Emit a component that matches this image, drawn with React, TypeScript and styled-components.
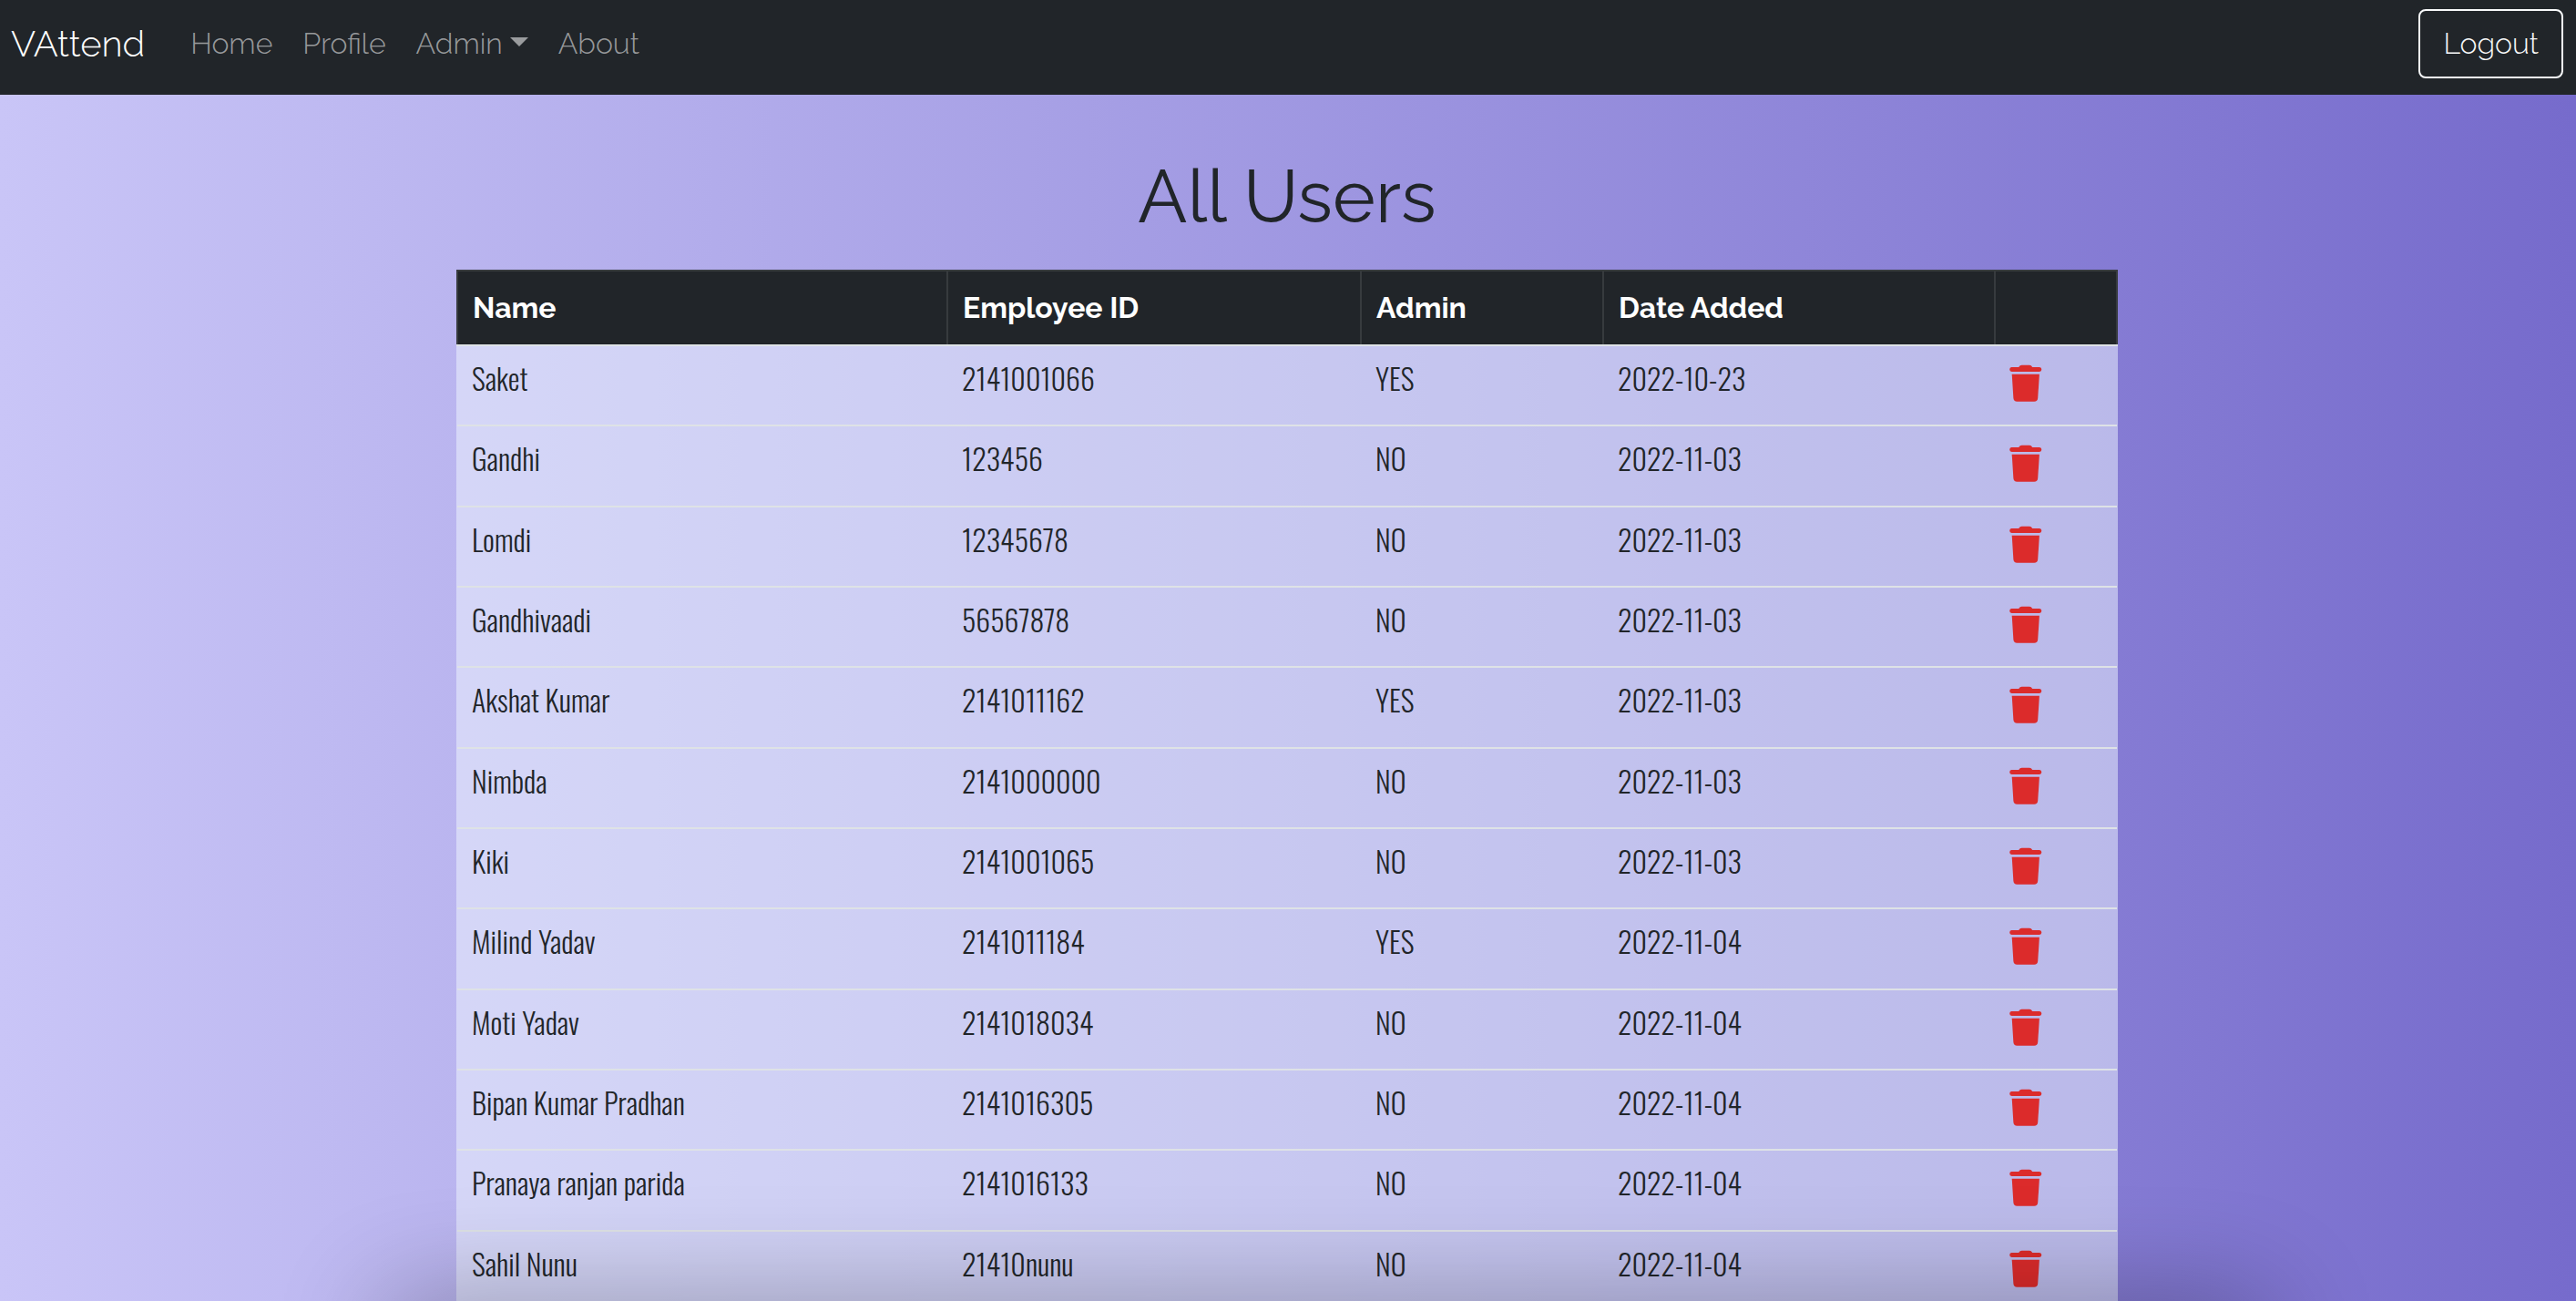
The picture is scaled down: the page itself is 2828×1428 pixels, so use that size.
import React from "react";
import styled, { createGlobalStyle } from "styled-components";

const raleway = `Raleway, Lato, sans-serif`;
const oswald = `Oswald, "Roboto Condensed", sans-serif`;

const GlobalStyle = createGlobalStyle`
  *, *::before, *::after { box-sizing: border-box; }
  body {
    margin: 0;
    font-family: ${raleway};
    font-size: 32px;
    line-height: 48px;
    color: #212529;
  }
`;

const Page = styled.div`
  height: 100vh;
  overflow: hidden;
  display: flex;
  flex-direction: column;
  background: linear-gradient(to right, #c9c5f7, #766bcc);
`;

const Navbar = styled.header`
  display: flex;
  align-items: flex-start;
  justify-content: space-between;
  flex-shrink: 0;
  height: 104px;
  padding: 10px 14px 0 12px;
  background: #212529;
`;

const NavGroup = styled.nav`
  display: flex;
  align-items: center;
  height: 76px;
`;

const Brand = styled.a`
  margin-right: 34px;
  font-size: 40px;
  font-weight: 300;
  color: #fff;
  text-decoration: none;
`;

const NavList = styled.ul`
  display: flex;
  gap: 1px;
  margin: 0;
  padding: 0;
  list-style: none;
`;

const NavLink = styled.a`
  display: flex;
  padding: 0 16px;
  font-weight: 300;
  color: rgba(255, 255, 255, 0.55);
  text-decoration: none;
`;

const Caret = styled.span`
  align-self: flex-start;
  margin: 17px 0 0 8px;
  border: 10px solid transparent;
  border-top-color: currentColor;
  border-bottom: 0;
`;

const LogoutButton = styled.button`
  height: 76px;
  padding: 0 25px;
  border: 2px solid #f8f9fa;
  border-radius: 8px;
  background: transparent;
  font: 300 32px/48px ${raleway};
  color: #f8f9fa;
  cursor: pointer;
`;

const Main = styled.main`
  display: flex;
  flex-direction: column;
  align-items: center;
  padding: 64px 2px 0 0;
`;

const Title = styled.h1`
  margin: 0 0 32px;
  font-size: 80px;
  font-weight: 400;
  line-height: 96px;
`;

const UserTable = styled.table`
  width: 1824px;
  max-width: 100%;
  table-layout: fixed;
  border-collapse: collapse;
  background: rgba(240, 248, 255, 0.5);
`;

const Column = styled.col<{ $width?: number }>`
  width: ${(p) => (p.$width ? `${p.$width}px` : "auto")};
`;

const HeadCell = styled.th`
  height: 82px;
  padding: 16px;
  border: 2px solid #373b3e;
  border-bottom-color: #dee2e6;
  background: #212529;
  font-weight: 700;
  text-align: left;
  color: #fff;
`;

const Row = styled.tr`
  height: 88px;
  border-bottom: 2px solid #dee2e6;

  &:nth-child(3n + 2) {
    height: 89px;
  }
`;

const Cell = styled.td`
  padding: 11px 16px 0;
  vertical-align: top;
  font-family: ${oswald};
  font-weight: 300;
`;

const DeleteButton = styled.button`
  display: flex;
  margin-top: 9px;
  padding: 0;
  border: 0;
  background: none;
  color: #dc2b2b;
  cursor: pointer;
`;

const BottomShade = styled.div`
  position: fixed;
  top: 100%;
  left: 15%;
  right: 12%;
  height: 100px;
  box-shadow: 0 0 120px rgba(0, 0, 0, 0.32);
  pointer-events: none;
`;

const TrashIcon = () => (
  <svg width="36" height="42" viewBox="0 0 36 42" fill="currentColor" aria-hidden="true">
    <path d="M2.2 3H10.2Q11.5 0.8 13.5 0.8H22Q24 0.8 25.2 3H33Q35.3 3.2 35.3 5.5Q35.3 7.8 33 7.9H2.5Q0.2 7.8 0.2 5.5Q0.2 3.2 2.2 3Z" />
    <path d="M2.7 10.8H32.9L31.2 37Q30.8 40.8 27.2 40.8H8.3Q4.8 40.8 4.4 37Z" />
  </svg>
);

const users = [
  ["Saket", "2141001066", "YES", "2022-10-23"],
  ["Gandhi", "123456", "NO", "2022-11-03"],
  ["Lomdi", "12345678", "NO", "2022-11-03"],
  ["Gandhivaadi", "56567878", "NO", "2022-11-03"],
  ["Akshat Kumar", "2141011162", "YES", "2022-11-03"],
  ["Nimbda", "2141000000", "NO", "2022-11-03"],
  ["Kiki", "2141001065", "NO", "2022-11-03"],
  ["Milind Yadav", "2141011184", "YES", "2022-11-04"],
  ["Moti Yadav", "2141018034", "NO", "2022-11-04"],
  ["Bipan Kumar Pradhan", "2141016305", "NO", "2022-11-04"],
  ["Pranaya ranjan parida", "2141016133", "NO", "2022-11-04"],
  ["Sahil Nunu", "21410nunu", "NO", "2022-11-04"],
];

export default function App() {
  return (
    <Page>
      <GlobalStyle />
      <Navbar>
        <NavGroup>
          <Brand href="#">VAttend</Brand>
          <NavList>
            <li><NavLink href="#">Home</NavLink></li>
            <li><NavLink href="#">Profile</NavLink></li>
            <li><NavLink href="#">Admin<Caret /></NavLink></li>
            <li><NavLink href="#">About</NavLink></li>
          </NavList>
        </NavGroup>
        <LogoutButton type="button">Logout</LogoutButton>
      </Navbar>
      <Main>
        <Title>All Users</Title>
        <UserTable>
          <colgroup>
            <Column $width={538} />
            <Column $width={454} />
            <Column $width={266} />
            <Column $width={430} />
            <Column />
          </colgroup>
          <thead>
            <tr>
              <HeadCell scope="col">Name</HeadCell>
              <HeadCell scope="col">Employee ID</HeadCell>
              <HeadCell scope="col">Admin</HeadCell>
              <HeadCell scope="col">Date Added</HeadCell>
              <HeadCell as="td" />
            </tr>
          </thead>
          <tbody>
            {users.map((user) => (
              <Row key={user[1]}>
                {user.map((value, i) => (
                  <Cell key={i}>{value}</Cell>
                ))}
                <Cell>
                  <DeleteButton type="button" aria-label={`Delete ${user[0]}`}>
                    <TrashIcon />
                  </DeleteButton>
                </Cell>
              </Row>
            ))}
          </tbody>
        </UserTable>
      </Main>
      <BottomShade />
    </Page>
  );
}
